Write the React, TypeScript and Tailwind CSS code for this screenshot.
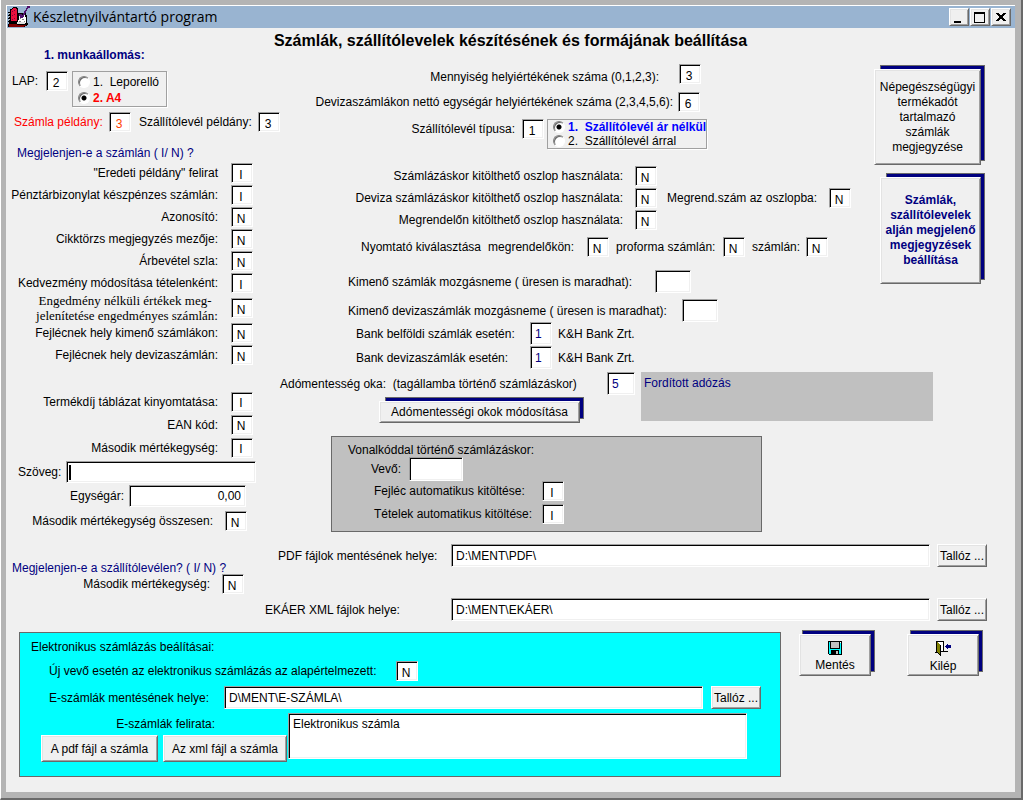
import { useId, type ReactNode } from "react";

const sunken =
  "border border-t-[#a0a0a0] border-l-[#a0a0a0] border-r-white border-b-white bg-white shadow-[inset_1px_1px_0_#000,inset_-1px_-1px_0_#f0f0f0] outline-none";
const raised =
  "border border-t-white border-l-white border-r-[#696969] border-b-[#696969] bg-[#f0f0f0] shadow-[inset_1px_1px_0_#e3e3e3,inset_-1px_-1px_0_#a0a0a0]";
const smallBox = "h-5 w-[22px] pt-[3px] pr-0.5 text-center";
const pathBox = "h-[23px] min-w-0 flex-1 px-1";

type FieldProps = {
  label: ReactNode;
  value?: string;
  className?: string;
  labelClass?: string;
  inputClass?: string;
};

function Field({
  label,
  value = "",
  className = "items-center",
  labelClass = "",
  inputClass = smallBox,
}: FieldProps) {
  const id = useId();
  return (
    <div className={`flex ${className}`}>
      <label htmlFor={id} className={`shrink-0 whitespace-pre ${labelClass}`}>
        {label}
      </label>
      <input id={id} type="text" defaultValue={value} className={`shrink-0 ${sunken} ${inputClass}`} />
    </div>
  );
}

type RadioProps = {
  name: string;
  label: string;
  checked?: boolean;
  className?: string;
};

function Radio({ name, label, checked = false, className = "" }: RadioProps) {
  return (
    <label className={`flex items-center gap-[3px] whitespace-pre ${className}`}>
      <input
        type="radio"
        name={name}
        defaultChecked={checked}
        className="size-3 shrink-0 appearance-none rounded-full border border-t-[#808080] border-l-[#808080] border-r-white border-b-white bg-white shadow-[inset_1px_1px_0_#696969] checked:bg-[radial-gradient(circle,#000_2px,#fff_3px)]"
      />
      {label}
    </label>
  );
}

type PlateButtonProps = {
  children: ReactNode;
  className?: string;
  plateClass?: string;
};

// raised button lying on a navy plate that sticks out at the top and right
function PlateButton({ children, className = "", plateClass = "left-1.5" }: PlateButtonProps) {
  return (
    <div className="relative">
      <div className={`absolute -top-1 -right-1 bottom-1 border border-[#696969] bg-[#000080] ${plateClass}`} />
      <button type="button" className={`relative ${raised} ${className}`}>
        {children}
      </button>
    </div>
  );
}

function BrowseButton() {
  return (
    <button type="button" className={`h-[23px] w-[50px] shrink-0 whitespace-nowrap ${raised}`}>
      Tallóz ...
    </button>
  );
}

function AppIcon() {
  return (
    <svg width="24" height="22" viewBox="0 0 24 22" shapeRendering="crispEdges" aria-hidden="true">
      <path d="M5 2h1V1h4v1h1v5h8v2h1v8h1v2h-1v1h-2v1H1v-3h1v-2H1v-1h1v-2H1v-1h1v-2H1V9h1V7H1V6h2V3h2z" fill="#000" />
      <path d="M6 2h3v1h1v12H4V4h1V3h1z" fill="#e8103c" />
      <path d="M2 7h1v1H2zM2 10h1v1H2zM2 13h1v1H2z" fill="#c0c0c0" />
      <path d="M5 5h1v1H5zM7 4h1v1H7zM5 9h1v1H5zM7 8h1v1H7zM5 13h1v1H5zM7 12h1v1H7z" fill="#800040" />
      <path d="M12 9h6v2h1v6h-8v-3h1z" fill="#fff" />
      <path d="M10 16h8v2h-8z" fill="#e0e0e0" />
      <path d="M13 12h1v1h-1zM15 13h2v1h-2zM12 15h2v1h-2zM17 15h1v1h-1zM16 10h1v1h-1z" fill="#808080" />
      <path d="M2 18h8v1h9v1h-2v1H2z" fill="#800000" />
      <path d="M20 0h3v2h-2v1h-1v2h-1v2h-1v2h-1v2h-1v1h-3v-2h-1V8h3v1h1V7h1V5h1V4h1V2h1z" fill="#50106c" />
    </svg>
  );
}

function FloppyIcon() {
  return (
    <svg width="14" height="14" viewBox="0 0 14 14" shapeRendering="crispEdges" aria-hidden="true">
      <path d="M0 0h14v14H1v-1H0z" fill="#000" />
      <path d="M1 1h12v12H1z" fill="#00ffff" />
      <path d="M2 0h10v8H2z" fill="#000" />
      <path d="M3 1h8v6H3z" fill="#c0c0c0" />
      <path d="M12 1h1v1h-1z" fill="#fff" />
      <path d="M3 9h8v4H3z" fill="#000" />
      <path d="M8 10h2v3H8z" fill="#c0c0c0" />
    </svg>
  );
}

function ExitIcon() {
  return (
    <svg width="17" height="15" viewBox="0 0 17 15" shapeRendering="crispEdges" aria-hidden="true">
      <path d="M1 0h8v10h4v1H6v4H5v-1H4v-1H3v-1H0v-1h1z" fill="#000" />
      <path d="M3 1h5v9H6V4H5V3H4V2H3z" fill="#fff" />
      <path d="M2 1h1v1h1v1h1v10H4v-1H3v-1H2z" fill="#808000" />
      <path d="M10 5h1V4h1V3h1v1h3v3h-3v1h-1V7h-1V6h-1z" fill="#000080" />
    </svg>
  );
}

const windowButtons = [
  { label: "Kis méret", path: "M4 12h7v2H4z" },
  { label: "Teljes méret", path: "M3 3h11v11H3zM4 5v8h9V5z" },
  {
    label: "Bezárás",
    path: "M4 4h3v1h1v1h2V5h1V4h3v1h-1v1h-1v1h-1v2h1v1h1v1h1v1h-3v-1h-1v-1H8v1H7v1H4v-1h1v-1h1V9h1V7H6V6H5V5H4z",
  },
];

function TitleBar() {
  return (
    <header className="flex h-[23px] items-center border-t border-l border-white bg-[#99b4d1] pr-1">
      <AppIcon />
      <span className="ml-0.5 flex-1 font-['Open_Sans','Noto_Sans',sans-serif] text-sm leading-5">
        Készletnyilvántartó program
      </span>
      <div className="flex gap-px">
        {windowButtons.map(({ label, path }) => (
          <button key={label} type="button" aria-label={label} className={`h-[18px] w-5 ${raised}`}>
            <svg width="18" height="16" viewBox="0 0 18 16" shapeRendering="crispEdges">
              <path d={path} fillRule="evenodd" />
            </svg>
          </button>
        ))}
      </div>
    </header>
  );
}

const right = "w-[212px] text-right";

function InvoiceFields() {
  return (
    <section className="flex w-[272px] shrink-0 flex-col">
      <h2 className="ml-[38px] leading-3 font-bold text-[#000080]">1. munkaállomás:</h2>
      <div className="mt-2.5 flex items-start">
        <Field label="LAP:" value="2" className="items-center pl-1.5" labelClass="w-[34px]" />
        <fieldset className="ml-1 h-9 w-[95px] border border-[#a0a0a0] px-[5px] pt-0.5 shadow-[1px_1px_0_#fff]">
          <Radio name="lap" label="1.  Leporelló" className="h-4" />
          <Radio name="lap" label="2. A4" checked className="h-4 font-bold text-[#ff0000]" />
        </fieldset>
      </div>
      <div className="mt-[5px] flex">
        <Field
          label="Számla példány:"
          value="3"
          labelClass="w-[103px] pl-2 text-[#ff0000]"
          inputClass={`${smallBox} text-[#ff4000]`}
        />
        <Field label="Szállítólevél példány:" value="3" labelClass="w-[127px] pl-2" />
      </div>

      <h3 className="mt-3.5 ml-[11px] leading-3.5 whitespace-nowrap text-[#000080]">
        Megjelenjen-e a számlán ( I/ N) ?
      </h3>
      <div className="mt-0.5">
        {[
          ['"Eredeti példány" felirat', "I"],
          ["Pénztárbizonylat készpénzes számlán:", "I"],
          ["Azonosító:", "N"],
          ["Cikktörzs megjegyzés mezője:", "N"],
          ["Árbevétel szla:", "N"],
          ["Kedvezmény módosítása tételenként:", "I"],
        ].map(([label, value]) => (
          <Field key={label} label={label} value={value} className="h-[22px] items-center gap-[13px]" labelClass={right} />
        ))}
      </div>
      <Field
        label={"Engedmény nélküli értékek meg-  \njelenítetése engedményes számlán:"}
        value="N"
        className="h-7 items-center gap-[13px]"
        labelClass={`${right} font-['Liberation_Serif',serif] text-[13px] leading-[15px]`}
      />
      {[
        ["Fejlécnek hely kimenő számlákon:", "N"],
        ["Fejlécnek hely devizaszámlán:", "N"],
      ].map(([label, value]) => (
        <Field key={label} label={label} value={value} className="h-[22px] items-center gap-[13px]" labelClass={right} />
      ))}

      <div className="mt-6">
        {[
          ["Termékdíj táblázat kinyomtatása:", "I"],
          ["EAN kód:", "N"],
          ["Második mértékegység:", "I"],
        ].map(([label, value]) => (
          <Field key={label} label={label} value={value} className="h-[23px] items-center gap-[13px]" labelClass={right} />
        ))}
      </div>
      <div className="relative mt-0.5">
        <Field label="Szöveg:" labelClass="w-[60px] pl-3" inputClass="h-[22px] w-[190px] px-1" />
        <span className="absolute top-1 left-[63px] h-[15px] w-0.5 bg-black" />
      </div>
      <Field
        label="Egységár:"
        value="0,00"
        className="mt-0.5 items-center gap-[5px]"
        labelClass="w-[118px] text-right"
        inputClass="h-[22px] w-[117px] px-1 text-right"
      />
      <Field
        label="Második mértékegység összesen:"
        value="N"
        className="mt-1 items-center gap-3"
        labelClass="w-[207px] text-right"
      />

      <h3 className="mt-[31px] ml-1.5 leading-3 whitespace-nowrap text-[#000080]">
        Megjelenjen-e a szállítólevélen? ( I/ N) ?
      </h3>
      <Field
        label="Második mértékegység:"
        value="N"
        className="items-center gap-3"
        labelClass="w-[204px] text-right"
      />
    </section>
  );
}

function ColumnFields() {
  return (
    <div className="mt-[15px] shrink-0">
      <Field
        label="Mennyiség helyiértékének száma (0,1,2,3):"
        value="3"
        className="items-end gap-5"
        labelClass="w-[381px] text-right leading-3.5"
      />
      <Field
        label="Devizaszámlákon nettó egységár helyiértékének száma (2,3,4,5,6):"
        value="6"
        className="mt-2 items-center gap-[5px]"
        labelClass="w-[395px] text-right"
      />
      <div className="mt-[7px] flex items-start gap-[3px]">
        <Field
          label="Szállítólevél típusa:"
          value="1"
          className="items-center gap-[7px]"
          labelClass="w-[237px] text-right"
        />
        <fieldset className="h-[30px] border border-[#a0a0a0] pl-[5px] whitespace-nowrap shadow-[1px_1px_0_#fff]">
          <Radio name="tipus" label="1.  Szállítólevél ár nélkül" checked className="h-3.5 font-bold text-[#0000ff]" />
          <Radio name="tipus" label="2.  Szállítólevél árral" className="h-3.5" />
        </fieldset>
      </div>

      <div className="mt-4 flex items-center gap-2.5">
        <div>
          {[
            "Számlázáskor kitölthető oszlop használata:",
            "Deviza számlázáskor kitölthető oszlop használata:",
            "Megrendelőn kitölthető oszlop használata:",
          ].map((label) => (
            <Field
              key={label}
              label={label}
              value="N"
              className="h-[22px] items-center gap-3"
              labelClass="w-[345px] text-right"
            />
          ))}
        </div>
        <Field label="Megrend.szám az oszlopba:" value="N" labelClass="w-[162px]" />
      </div>
      <div className="mt-1.5 ml-[83px] flex items-center gap-[7px]">
        <span>Nyomtató kiválasztása</span>
        <Field label="megrendelőkön:" value="N" labelClass="w-[99px]" />
        <Field label="proforma számlán:" value="N" labelClass="w-[107px]" />
        <Field label="számlán:" value="N" labelClass="w-[54px]" />
      </div>

      <Field
        label="Kimenő számlák mozgásneme ( üresen is maradhat):"
        className="mt-[13px] ml-[70px] items-center"
        labelClass="w-[307px]"
        inputClass="h-[23px] w-9"
      />
      <Field
        label="Kimenő devizaszámlák mozgásneme ( üresen is maradhat):"
        className="mt-1.5 ml-[70px] items-center"
        labelClass="w-[334px]"
        inputClass="h-[23px] w-9"
      />
      {["Bank belföldi számlák esetén:", "Bank devizaszámlák esetén:"].map((label) => (
        <div key={label} className="ml-[78px] flex items-center gap-1.5 pb-px">
          <Field
            label={label}
            value="1"
            labelClass="w-[174px]"
            inputClass="h-[23px] w-[22px] pl-1 text-[#000080]"
          />
          <span>K&amp;H Bank Zrt.</span>
        </div>
      ))}
    </div>
  );
}

function BarcodePanel() {
  return (
    <div className="mt-[13px] ml-[53px] h-24 w-[431px] border border-[#696969] bg-[#c0c0c0] pt-1.5 pl-4">
      <div className="leading-3.5">Vonalkóddal történő számlázáskor:</div>
      <Field label="Vevő:" className="ml-[23px] items-center" labelClass="w-[38px]" inputClass="h-6 w-[54px]" />
      <div className="ml-[26px] flex flex-col gap-[3px]">
        <Field label="Fejléc automatikus kitöltése:" value="I" labelClass="w-[168px]" />
        <Field label="Tételek automatikus kitöltése:" value="I" labelClass="w-[168px]" />
      </div>
    </div>
  );
}

function ElectronicPanel() {
  return (
    <section className="min-w-0 flex-1 border border-[#696969] bg-[#00ffff] pt-[7px] pb-3.5 pl-[11px]">
      <h3 className="leading-3.5">Elektronikus számlázás beálításai:</h3>
      <Field
        label="Új vevő esetén az elektronikus számlázás az alapértelmezett:"
        value="N"
        className="mt-[7px] ml-[18px] items-center"
        labelClass="w-[347px]"
      />
      <div className="mt-[5px] mr-[19px] ml-[18px] flex gap-2">
        <Field
          label="E-számlák mentésének helye:"
          value="D\MENT\E-SZÁMLA\"
          className="min-w-0 flex-1 items-center"
          labelClass="w-[175px]"
          inputClass={pathBox}
        />
        <BrowseButton />
      </div>
      <div className="mt-1 mr-[33px] ml-2.5 flex items-start">
        <div className="w-[247px] shrink-0">
          <label htmlFor="felirat" className="block w-[174px] pt-1 pb-1 text-right leading-3.5">
            E-számlák felirata:
          </label>
          <div className="flex gap-[5px]">
            <button type="button" className={`h-[27px] w-[117px] whitespace-nowrap ${raised}`}>
              A pdf fájl a számla
            </button>
            <button type="button" className={`h-[27px] w-[124px] whitespace-nowrap ${raised}`}>
              Az xml fájl a számla
            </button>
          </div>
        </div>
        <textarea
          id="felirat"
          defaultValue="Elektronikus számla"
          className={`h-[46px] min-w-0 flex-1 resize-none px-1 pt-0.5 ${sunken}`}
        />
      </div>
    </section>
  );
}

export default function App() {
  return (
    <div className="flex min-h-screen flex-col border-r-2 border-b-2 border-l border-r-[#696969] border-b-[#696969] border-l-white bg-[#b4b4b4] pt-[5px] pr-1.5 pb-1.5 pl-[5px] font-['Liberation_Sans',Arial,sans-serif] text-xs text-black">
      <TitleBar />
      <main className="flex-1 bg-[#f0f0f0] pb-3.5">
        <h1 className="pt-[5px] text-center text-base leading-4 font-bold">
          Számlák, szállítólevelek készítésének és formájának beállítása
        </h1>
        <div className="flex items-start">
          <InvoiceFields />
          <section className="min-w-0 flex-1">
            <div className="flex items-start justify-between">
              <ColumnFields />
              <div className="mt-5 mr-[34px] flex flex-col items-end gap-3">
                <PlateButton className="h-24 w-[107px] leading-[15px]">
                  Népegészségügyi
                  <br />
                  termékadót
                  <br />
                  tartalmazó
                  <br />
                  számlák
                  <br />
                  megjegyzése
                </PlateButton>
                <PlateButton className="h-[107px] w-[101px] leading-[15px] font-bold whitespace-nowrap text-[#000080]">
                  Számlák,
                  <br />
                  szállítólevelek
                  <br />
                  alján megjelenő
                  <br />
                  megjegyzések
                  <br />
                  beállítása
                </PlateButton>
              </div>
            </div>
            <div className="mt-0.5 flex">
              <div className="flex w-[363px] shrink-0 flex-col gap-1.5">
                <Field
                  label="Adómentesség oka:  (tagállamba történő számlázáskor)"
                  value="5"
                  labelClass="w-[329px] pl-0.5"
                  inputClass="h-[23px] w-7 pl-1 text-[#000080]"
                />
                <div className="ml-[101px] flex">
                  <PlateButton className="h-[22px] w-[201px] whitespace-nowrap">
                    Adómentességi okok módosítása
                  </PlateButton>
                </div>
              </div>
              <div className="h-[49px] w-[292px] bg-[#c0c0c0] px-[3px] pt-[3px] text-[#000080]">Fordított adózás</div>
            </div>
            <BarcodePanel />
            <div className="mt-3 mr-7 flex gap-[7px]">
              <Field
                label="PDF fájlok mentésének helye:"
                value="D:\MENT\PDF\"
                className="min-w-0 flex-1 items-center"
                labelClass="w-[173px]"
                inputClass={pathBox}
              />
              <BrowseButton />
            </div>
          </section>
        </div>
        <div className="mt-1 mr-7 ml-[259px] flex gap-[7px]">
          <Field
            label="EKÁER XML fájlok helye:"
            value="D:\MENT\EKÁER\"
            className="min-w-0 flex-1 items-center"
            labelClass="w-[186px]"
            inputClass={pathBox}
          />
          <BrowseButton />
        </div>
        <div className="mt-[11px] mr-9 ml-[13px] flex items-start">
          <ElectronicPanel />
          <div className="mt-0.5 ml-[18px] flex gap-9">
            <PlateButton className="h-[42px] w-[72px]" plateClass="left-[3px]">
              <span className="flex flex-col items-center gap-0.5 pt-1">
                <FloppyIcon />
                Mentés
              </span>
            </PlateButton>
            <PlateButton className="h-[42px] w-[72px]" plateClass="left-[3px]">
              <span className="flex flex-col items-center gap-0.5 pt-1">
                <ExitIcon />
                Kilép
              </span>
            </PlateButton>
          </div>
        </div>
      </main>
    </div>
  );
}
